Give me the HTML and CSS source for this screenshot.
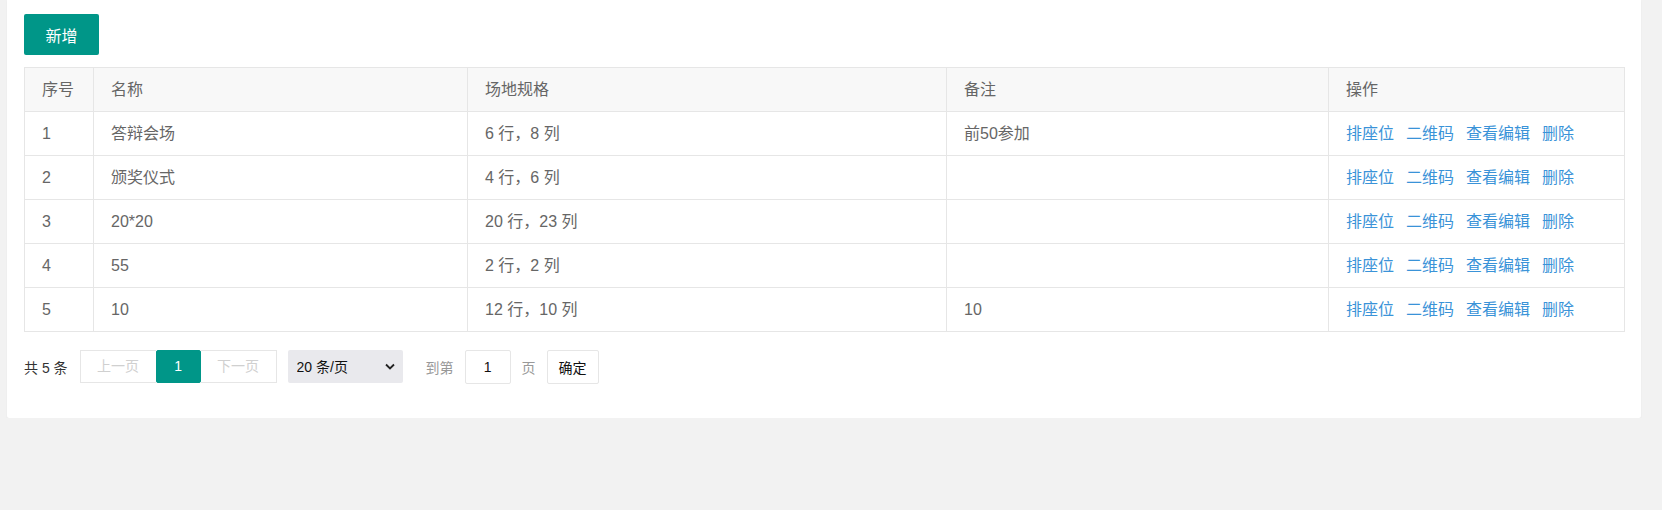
FILE: index.html
```html
<!DOCTYPE html>
<html lang="zh-CN">
<head>
<meta charset="utf-8">
<title>场地管理</title>
<link rel="stylesheet" href="styles.css">
</head>
<body>
<div class="card">
  <button class="btn-add" type="button">新增</button>
  <table class="data-table">
    <colgroup>
      <col class="c1"><col class="c2"><col class="c3"><col class="c4"><col class="c5">
    </colgroup>
    <thead>
      <tr><th>序号</th><th>名称</th><th>场地规格</th><th>备注</th><th>操作</th></tr>
    </thead>
    <tbody>
      <tr><td>1</td><td>答辩会场</td><td>6 行，8 列</td><td>前50参加</td>
        <td class="ops"><a>排座位</a><a>二维码</a><a>查看编辑</a><a>删除</a></td></tr>
      <tr><td>2</td><td>颁奖仪式</td><td>4 行，6 列</td><td></td>
        <td class="ops"><a>排座位</a><a>二维码</a><a>查看编辑</a><a>删除</a></td></tr>
      <tr><td>3</td><td>20*20</td><td>20 行，23 列</td><td></td>
        <td class="ops"><a>排座位</a><a>二维码</a><a>查看编辑</a><a>删除</a></td></tr>
      <tr><td>4</td><td>55</td><td>2 行，2 列</td><td></td>
        <td class="ops"><a>排座位</a><a>二维码</a><a>查看编辑</a><a>删除</a></td></tr>
      <tr><td>5</td><td>10</td><td>12 行，10 列</td><td>10</td>
        <td class="ops"><a>排座位</a><a>二维码</a><a>查看编辑</a><a>删除</a></td></tr>
    </tbody>
  </table>
  <div class="pager">
    <span class="count">共 5 条</span>
    <div class="pages">
      <span class="pg pg-prev">上一页</span>
      <span class="pg pg-cur">1</span>
      <span class="pg pg-next">下一页</span>
    </div>
    <div class="limit">
      <select class="limit-select">
        <option>20 条/页</option>
      </select>
      <svg class="chev" width="10" height="7" viewBox="0 0 10 7"><path d="M1 1.5 L5 5.5 L9 1.5" fill="none" stroke="#222" stroke-width="1.8"/></svg>
    </div>
    <span class="skip-label">到第</span>
    <input class="skip-input" type="text" value="1">
    <span class="skip-label2">页</span>
    <button class="skip-btn" type="button">确定</button>
  </div>
</div>
</body>
</html>
```
FILE: styles.css
```css
html, body {
  margin: 0;
  padding: 0;
}
body {
  background: #f2f2f2;
  padding: 0 21px 0 7px;
  font-family: "Liberation Sans", "Noto Sans CJK SC", sans-serif;
  color: #666;
}
.card {
  background: #fff;
  border-radius: 0 0 2px 2px;
  box-shadow: 0 1px 2px 0 rgba(0,0,0,0.06);
  padding: 14px 17px 35px;
}
.btn-add {
  display: block;
  width: 75px;
  height: 41px;
  border: none;
  border-radius: 2px;
  background: #009688;
  color: #fff;
  font-family: inherit;
  font-size: 16px;
  padding: 0;
  margin: 0 0 12px;
}
.data-table {
  width: 1600px;
  table-layout: fixed;
  border-collapse: collapse;
  font-size: 16px;
  color: #666;
}
.c1 { width: 69px; }
.c2 { width: 374px; }
.c3 { width: 479px; }
.c4 { width: 382px; }
.c5 { width: 296px; }
.data-table th,
.data-table td {
  border: 1px solid #e6e6e6;
  padding: 11px 17px;
  line-height: 21px;
  text-align: left;
  font-weight: normal;
  white-space: nowrap;
}
.data-table thead th {
  background: #f8f8f8;
}
.ops a {
  color: #3a93d8;
  margin-right: 12px;
  cursor: pointer;
}
.pager {
  display: flex;
  align-items: center;
  margin-top: 18px;
  height: 33px;
  font-size: 14px;
}
.count {
  color: #333;
  margin-right: 12px;
}
.pages {
  display: flex;
  height: 33px;
}
.pg {
  box-sizing: border-box;
  height: 33px;
  line-height: 31px;
  border: 1px solid #e6e6e6;
  background: #fff;
  color: #d0d0d0;
  text-align: center;
}
.pg-prev { width: 76px; border-right: none; }
.pg-next { width: 76px; border-left: none; }
.pg-cur {
  width: 45px;
  background: #009688;
  border-color: #009688;
  color: #fff;
  border-radius: 2px;
}
.limit {
  position: relative;
  margin-left: 11px;
  width: 115px;
  height: 33px;
}
.limit-select {
  appearance: none;
  -webkit-appearance: none;
  width: 115px;
  height: 33px;
  border: none;
  border-radius: 2px;
  background: #e9e9ed;
  color: #111;
  font-family: inherit;
  font-size: 14px;
  padding: 0 0 0 9px;
  margin: 0;
}
.chev {
  position: absolute;
  right: 8px;
  top: 13px;
  pointer-events: none;
}
.skip-label {
  color: #999;
  margin-left: 23px;
}
.skip-input {
  box-sizing: border-box;
  width: 46px;
  height: 34px;
  margin-left: 11px;
  border: 1px solid #e6e6e6;
  border-radius: 2px;
  text-align: center;
  font-family: inherit;
  font-size: 14px;
  color: #111;
  padding: 0;
}
.skip-label2 {
  color: #999;
  margin-left: 11px;
}
.skip-btn {
  box-sizing: border-box;
  width: 52px;
  height: 34px;
  margin-left: 11px;
  border: 1px solid #e6e6e6;
  border-radius: 2px;
  background: #fff;
  color: #111;
  font-family: inherit;
  font-size: 14px;
  padding: 0;
}
```
